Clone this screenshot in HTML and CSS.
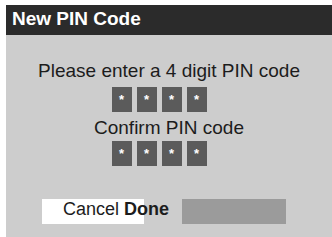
FILE: index.html
```html
<!DOCTYPE html>
<html lang="en">
<head>
  <meta charset="UTF-8" />
  <title>New PIN Code</title>
  <link rel="stylesheet" href="styles.css">
</head>
<body>
  <div class="panel">
    <div class="panel-head">New PIN Code</div>

    <div class="panel-body">
      <p class="prompt">Please enter a 4 digit PIN code</p>
      <div class="pin-row">
        <span class="pin">*</span>
        <span class="pin">*</span>
        <span class="pin">*</span>
        <span class="pin">*</span>
      </div>

      <p class="prompt confirm">Confirm PIN code</p>
      <div class="pin-row second">
        <span class="pin">*</span>
        <span class="pin">*</span>
        <span class="pin">*</span>
        <span class="pin">*</span>
      </div>

      <div class="actions">
        <div class="btn btn-cancel">Cancel <b>Done</b></div>
        <div class="btn btn-blank"></div>
      </div>
    </div>
  </div>
</body>
</html>
```

FILE: styles.css
```css
body {
  margin: 0;
  padding: 0;
  background: #fff;
  font-family: "Liberation Sans", Arial, sans-serif;
  overflow: hidden;
}
.panel {
  margin: 5px 0 0 6px;
  height: 240px;
  background: #cdcdcd;
}
.panel-head {
  height: 30px;
  line-height: 27px;
  padding-left: 6px;
  background: #2b2b2b;
  color: #fff;
  font-size: 19px;
  font-weight: bold;
}
.panel-body {
  padding-top: 25px;
  color: #1c1c1c;
}
.prompt {
  margin: 0;
  font-size: 19px;
  line-height: 22px;
  text-align: center;
}
.confirm {
  margin-top: 5px;
}
.pin-row {
  display: flex;
  justify-content: center;
  gap: 5px;
  margin-top: 5px;
  padding-right: 20px;
}
.pin-row.second {
  margin-top: 2px;
}
.pin {
  width: 20px;
  height: 25px;
  background: #5b5b5b;
  color: #fff;
  font-size: 13px;
  font-weight: bold;
  line-height: 25px;
  text-align: center;
}
.actions {
  display: flex;
  gap: 38px;
  margin: 33px 0 0 36px;
}
.btn {
  height: 25px;
  line-height: 20px;
  font-size: 18px;
}
.btn-cancel {
  width: 81px;
  padding-left: 21px;
  background: #fff;
  white-space: nowrap;
}
.btn-blank {
  width: 104px;
  background: #9b9b9b;
}
```
